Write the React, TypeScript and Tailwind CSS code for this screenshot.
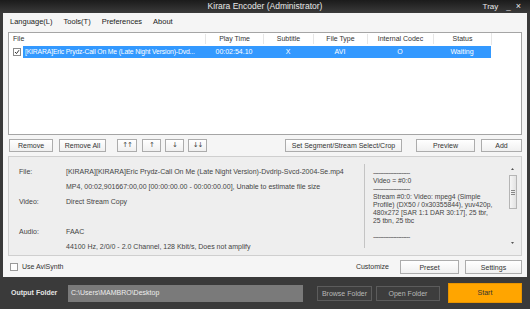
import React from "react";

const font = "font-['Liberation_Sans',Arial,sans-serif]";

function Btn({ w, children, cls = "" }: { w: string; children: React.ReactNode; cls?: string }) {
  return (
    <div
      className={`${w} h-full flex items-center justify-center border border-[#acacac] bg-gradient-to-b from-[#ffffff] to-[#f0f0f0] text-[#333] text-[7px] leading-none ${cls}`}
    >
      {children}
    </div>
  );
}

function DarkBtn({ w, children }: { w: string; children: React.ReactNode }) {
  return (
    <div
      className={`${w} h-[15px] flex items-center justify-center border border-[#5c5c5c] bg-[#3d3d3d] text-[#b8b8b8] text-[7px] leading-none`}
    >
      {children}
    </div>
  );
}

export default function App() {
  const cols = [
    { name: "Play Time", w: "w-[58px]", v: "00:02:54.10" },
    { name: "Subtitle", w: "w-[50px]", v: "X" },
    { name: "File Type", w: "w-[54px]", v: "AVI" },
    { name: "Internal Codec", w: "w-[66px]", v: "O" },
    { name: "Status", w: "w-[58px]", v: "Waiting" },
  ];

  const arrow = "font-['DejaVu_Sans',sans-serif] text-[7px] tracking-[-1px] text-[#444]";

  return (
    <div className={`w-[530px] h-[309px] bg-[#3a3a3a] flex flex-col overflow-hidden ${font} text-[7px] text-[#333]`}>
      {/* title bar */}
      <div className="h-[13px] grid grid-cols-[1fr_auto_1fr] items-center bg-gradient-to-b from-[#1b1b1b] to-[#3b3b3b] text-[#e8e8e8]">
        <div />
        <div className="text-[8.5px] leading-none">Kirara Encoder (Administrator)</div>
        <div className="flex justify-end items-center gap-[8px] pr-[9px] text-[8px] leading-none">
          <span>Tray</span>
          <span className="flex items-center gap-[5px]">
            <span className="text-[8px]">_</span>
            <span className="text-[9px]">×</span>
          </span>
        </div>
      </div>

      {/* body */}
      <div className="h-[264px] mx-[3px] bg-[#f5f5f5] flex flex-col px-[5px]">
        {/* menu */}
        <div className="h-[17px] flex items-center gap-[11px] pl-[2px] text-[7.5px] text-[#222]">
          <span>Language(L)</span>
          <span>Tools(T)</span>
          <span>Preferences</span>
          <span>About</span>
        </div>

        {/* file list */}
        <div className="h-[103px] mt-[2px] bg-white border border-[#a5a5a5] flex flex-col">
          <div className="h-[12px] flex items-center text-[#333]">
            <div className="w-[196px] pl-[4px]">File</div>
            {cols.map((c) => (
              <div key={c.name} className={`${c.w} text-center border-l border-[#e6e6e6]`}>
                {c.name}
              </div>
            ))}
            <div className="flex-1 self-stretch border-l border-[#e6e6e6]" />
          </div>
          <div className="h-[12px] mt-[1px] flex items-center">
            <div className="pl-[4px] pr-[2px] flex items-center">
              <div className="w-[8px] h-[8px] border border-[#8a8a8a] bg-white flex items-center justify-center">
                <svg width="6" height="6" viewBox="0 0 6 6">
                  <path d="M1 3 L2.5 4.6 L5 1.2" fill="none" stroke="#333" strokeWidth="1" />
                </svg>
              </div>
            </div>
            <div className="h-full flex items-center bg-[#3399ff] text-white">
              <div className="w-[182px] pl-[2px] whitespace-nowrap tracking-[-0.15px] text-[6.8px]">
                [KIRARA]Eric Prydz-Call On Me (Late Night Version)-Dvd...
              </div>
              {cols.map((c) => (
                <div key={c.name} className={`${c.w} text-center`}>
                  {c.v}
                </div>
              ))}
            </div>
          </div>
        </div>

        {/* list buttons */}
        <div className="h-[13px] mt-[4px] flex pl-[1px]">
          <Btn w="w-[44px]">Remove</Btn>
          <div className="w-[6px]" />
          <Btn w="w-[47px]">Remove All</Btn>
          <div className="w-[11px]" />
          <Btn w="w-[20px]" cls={arrow}>↑↑</Btn>
          <div className="w-[5px]" />
          <Btn w="w-[19px]" cls={arrow}>↑</Btn>
          <div className="w-[4px]" />
          <Btn w="w-[19px]" cls={arrow}>↓</Btn>
          <div className="w-[4px]" />
          <Btn w="w-[19px]" cls={arrow}>↓↓</Btn>
          <div className="flex-1" />
          <Btn w="w-[117px]">Set Segment/Stream Select/Crop</Btn>
          <div className="w-[14px]" />
          <Btn w="w-[59px]">Preview</Btn>
          <div className="w-[6px]" />
          <Btn w="w-[41px]">Add</Btn>
        </div>

        {/* info panel */}
        <div className="h-[100px] mt-[4px] bg-[#eeeeee] border border-[#cfcfcf] flex">
          <div className="flex-1 pt-[7px] pl-[10px] leading-[15px] text-[#444]">
            <div className="flex">
              <span className="w-[47px]">File:</span>
              <span>[KIRARA][KIRARA]Eric Prydz-Call On Me (Late Night Version)-Dvdrip-Svcd-2004-Se.mp4</span>
            </div>
            <div className="flex">
              <span className="w-[47px]" />
              <span>MP4, 00:02,901667:00,00 [00:00:00.00 - 00:00:00.00], Unable to estimate file size</span>
            </div>
            <div className="flex">
              <span className="w-[47px]">Video:</span>
              <span>Direct Stream Copy</span>
            </div>
            <div className="h-[15px]" />
            <div className="flex">
              <span className="w-[47px]">Audio:</span>
              <span>FAAC</span>
            </div>
            <div className="flex">
              <span className="w-[47px]" />
              <span>44100 Hz, 2/0/0 - 2.0 Channel, 128 Kbit/s, Does not amplify</span>
            </div>
          </div>
          <div className="w-[157px] flex py-[7px]">
            <div className="w-[1px] bg-[#c4c4c4]" />
            <div className="flex-1 pl-[8px] pt-[5px] leading-[8px] text-[#444] text-[6.8px]">
              <div className="tracking-[-0.6px]">----------------------</div>
              <div>Video = #0:0</div>
              <div className="tracking-[-0.6px]">----------------------</div>
              <div>Stream #0:0: Video: mpeg4 (Simple</div>
              <div>Profile) (DX50 / 0x30355844), yuv420p,</div>
              <div>480x272 [SAR 1:1 DAR 30:17], 25 tbr,</div>
              <div>25 tbn, 25 tbc</div>
              <div className="h-[8px]" />
              <div className="tracking-[-0.6px]">----------------------</div>
            </div>
            <div className="w-[9px] mr-[4px] flex flex-col items-center">
              <svg width="5" height="4" viewBox="0 0 5 4" className="mt-[3px]">
                <path d="M2.5 1 L4 3 L1 3 Z" fill="#555" />
              </svg>
              <div className="w-[8px] h-[34px] mt-[4px] border border-[#b5b5b5] bg-gradient-to-r from-[#f6f6f6] to-[#e2e2e2] flex flex-col items-center justify-center gap-[1px]">
                <div className="w-[4px] h-[1px] bg-[#888]" />
                <div className="w-[4px] h-[1px] bg-[#888]" />
                <div className="w-[4px] h-[1px] bg-[#888]" />
              </div>
              <div className="flex-1" />
              <svg width="5" height="4" viewBox="0 0 5 4" className="mb-[3px]">
                <path d="M1 1 L4 1 L2.5 3 Z" fill="#555" />
              </svg>
            </div>
          </div>
        </div>

        {/* bottom options */}
        <div className="h-[14px] mt-[4px] flex items-center">
          <div className="w-[8px] h-[8px] ml-[2px] border border-[#9a9a9a] bg-white" />
          <span className="ml-[4px] text-[#333]">Use AviSynth</span>
          <div className="flex-1" />
          <span className="text-[#333] mr-[11px]">Customize</span>
          <Btn w="w-[59px]">Preset</Btn>
          <div className="w-[6px]" />
          <Btn w="w-[57px]">Settings</Btn>
        </div>
      </div>

      {/* output folder bar */}
      <div className="flex-1 flex items-center pl-[11px] pr-[8px] bg-[#3a3a3a]">
        <span className="w-[57px] font-bold text-[#e4e4e4] text-[7px]">Output Folder</span>
        <div className="w-[235px] h-[17px] bg-[#7a7a7a] flex items-center pl-[3px] text-[#eeeeee]">
          C:\Users\MAMBRO\Desktop
        </div>
        <div className="w-[14px]" />
        <DarkBtn w="w-[55px]">Browse Folder</DarkBtn>
        <div className="w-[4px]" />
        <DarkBtn w="w-[64px]">Open Folder</DarkBtn>
        <div className="flex-1" />
        <div className="w-[74px] h-[20px] bg-[#ffa500] border border-[#e89400] flex items-center justify-center text-[#333] text-[7px]">
          Start
        </div>
      </div>
    </div>
  );
}
